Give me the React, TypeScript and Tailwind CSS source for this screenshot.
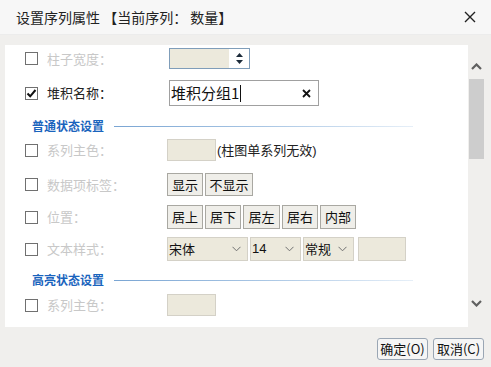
import React from "react";

const cjk = { fontFamily: '"Noto Sans CJK SC", "Noto Sans", sans-serif' };

function Checkbox({ checked = false }: { checked?: boolean }) {
  return (
    <span className="w-[13px] h-[13px] border border-[#707070] bg-white flex items-center justify-center shrink-0">
      {checked && (
        <svg width="11" height="11" viewBox="0 0 11 11">
          <path d="M1.5 5.5 L4.2 8.3 L9.5 2" fill="none" stroke="#111" strokeWidth="2" />
        </svg>
      )}
    </span>
  );
}

function Row({
  label,
  enabled = false,
  checked = false,
  className = "",
  children,
}: {
  label: string;
  enabled?: boolean;
  checked?: boolean;
  className?: string;
  children: React.ReactNode;
}) {
  return (
    <div className={`flex items-center pl-[20px] ${className}`}>
      <Checkbox checked={checked} />
      <span
        className={`ml-[9px] w-[120px] text-[13px] ${enabled ? "text-[#222]" : "text-[#c8c8c8]"}`}
      >
        {label}
      </span>
      {children}
    </div>
  );
}

function Section({ title, className = "" }: { title: string; className?: string }) {
  return (
    <div className={`flex items-center h-[20px] pl-[27px] ${className}`}>
      <span className="text-[12px] font-bold text-[#1a64bd] w-[82px]">{title}</span>
      <span className="h-px w-[299px] bg-gradient-to-r from-[#7aa5d3] via-[#a9c6e4] to-[#e6eff8]" />
    </div>
  );
}

function Btn({ text, w }: { text: string; w: string }) {
  return (
    <span
      className={`${w} h-full flex items-center justify-center border border-[#a9a8a2] bg-[#efeee9] text-[13px] text-[#111]`}
    >
      {text}
    </span>
  );
}

function Chevron() {
  return (
    <svg width="9" height="6" viewBox="0 0 9 6">
      <path d="M0.5 0.8 L4.5 4.8 L8.5 0.8" fill="none" stroke="#707070" strokeWidth="1" />
    </svg>
  );
}

function Select({ text, w, arial = false }: { text: string; w: string; arial?: boolean }) {
  return (
    <span
      className={`${w} h-full flex items-center justify-between pl-[1px] pr-[6px] border border-[#d4d1c7] bg-[#ece9dc] text-[13px] text-[#111]`}
    >
      <span style={arial ? { fontFamily: '"Liberation Sans", sans-serif' } : undefined}>{text}</span>
      <Chevron />
    </span>
  );
}

export default function App() {
  return (
    <div className="w-[491px] h-[367px] bg-[#f0efed] flex flex-col overflow-hidden" style={cjk}>
      {/* Title */}
      <div className="h-[35px] bg-[#f7f7f7] flex items-center justify-between pl-[16px] pr-[15px] border-b border-[#ececec]">
        <span className="text-[14px] text-[#222]">设置序列属性 【当前序列： 数量】</span>
        <svg width="12" height="12" viewBox="0 0 12 12">
          <path d="M1 1 L11 11 M11 1 L1 11" stroke="#222" strokeWidth="1.4" />
        </svg>
      </div>

      {/* Body */}
      <div className="flex pt-[10px]">
        <div className="ml-[5px] w-[463px] h-[282px] bg-white flex flex-col">
          <Row label="柱子宽度：" className="mt-[3px] h-[21px]">
            <span className="ml-[2px] w-[81px] h-full flex border border-[#7f9db9] bg-[#ece9dc]">
              <span className="flex-1" />
              <span className="w-[20px] bg-white flex flex-col items-center justify-center gap-[3px]">
                <svg width="7" height="4" viewBox="0 0 7 4">
                  <path d="M3.5 0 L7 4 L0 4 Z" fill="#1c2b3a" />
                </svg>
                <svg width="7" height="4" viewBox="0 0 7 4">
                  <path d="M0 0 L7 0 L3.5 4 Z" fill="#1c2b3a" />
                </svg>
              </span>
            </span>
          </Row>

          <Row label="堆积名称：" enabled checked className="mt-[11px] h-[26px]">
            <span className="ml-[2px] w-[150px] h-full flex items-center justify-between border border-[#a0a0a0] bg-white pl-[1px] pr-[7px]">
              <span className="flex items-center text-[15px] text-[#111]">
                堆积分组1
                <span className="ml-[1px] w-px h-[17px] bg-[#111]" />
              </span>
              <svg width="9" height="9" viewBox="0 0 9 9">
                <path d="M1 1 L8 8 M8 1 L1 8" stroke="#111" strokeWidth="1.8" />
              </svg>
            </span>
          </Row>

          <Section title="普通状态设置" className="mt-[10px]" />

          <Row label="系列主色：" className="mt-[3px] h-[22px]">
            <span className="w-[49px] h-full border border-[#d4d1c7] bg-[#ece9dc]" />
            <span className="ml-[1px] text-[13px] text-[#222]">
              <span style={{ fontFamily: '"Liberation Sans", sans-serif' }}>(</span>
              柱图单系列无效
              <span style={{ fontFamily: '"Liberation Sans", sans-serif' }}>)</span>
            </span>
          </Row>

          <Row label="数据项标签：" className="mt-[12px] h-[23px]">
            <div className="flex gap-[2px] h-full">
              <Btn text="显示" w="w-[36px]" />
              <Btn text="不显示" w="w-[48px]" />
            </div>
          </Row>

          <Row label="位置：" className="mt-[9px] h-[24px]">
            <div className="flex gap-[2px] h-full">
              <Btn text="居上" w="w-[36px]" />
              <Btn text="居下" w="w-[36px]" />
              <Btn text="居左" w="w-[37px]" />
              <Btn text="居右" w="w-[36px]" />
              <Btn text="内部" w="w-[36px]" />
            </div>
          </Row>

          <Row label="文本样式：" className="mt-[8px] h-[24px]">
            <div className="flex gap-[2px] h-full">
              <Select text="宋体" w="w-[81px]" />
              <Select text="14" w="w-[51px]" arial />
              <Select text="常规" w="w-[51px]" />
              <span className="ml-[2px] w-[48px] h-full border border-[#d4d1c7] bg-[#ece9dc]" />
            </div>
          </Row>

          <Section title="高亮状态设置" className="mt-[9px]" />

          <Row label="系列主色：" className="mt-[4px] h-[22px]">
            <span className="w-[49px] h-full border border-[#d4d1c7] bg-[#ece9dc]" />
          </Row>
        </div>

        {/* Scrollbar */}
        <div className="w-[17px] h-[282px] flex flex-col items-center">
          <svg className="mt-[18px]" width="11" height="7" viewBox="0 0 11 7">
            <path d="M1 6 L5.5 1.5 L10 6" fill="none" stroke="#606060" strokeWidth="2.2" />
          </svg>
          <span className="mt-[9px] w-[15px] h-[80px] bg-[#cdcdcd]" />
          <svg className="mt-[141px]" width="11" height="7" viewBox="0 0 11 7">
            <path d="M1 1 L5.5 5.5 L10 1" fill="none" stroke="#606060" strokeWidth="2.2" />
          </svg>
        </div>
      </div>

      {/* Footer */}
      <div className="flex justify-end gap-[5px] pr-[7px] pt-[11px]">
        <span className="w-[51px] h-[22px] flex items-center justify-center rounded-[3px] border border-[#9aa6b4] bg-[#f5f5f5] text-[13px] text-[#111]">
          确定(O)
        </span>
        <span className="w-[51px] h-[22px] flex items-center justify-center rounded-[3px] border border-[#9aa6b4] bg-[#f5f5f5] text-[13px] text-[#111]">
          取消(C)
        </span>
      </div>
    </div>
  );
}
